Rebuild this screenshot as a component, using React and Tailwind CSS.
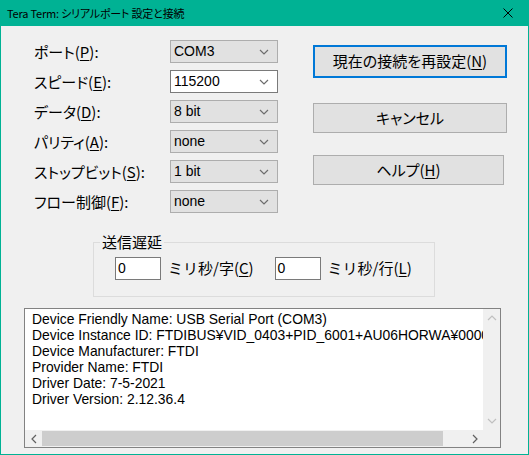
import React from 'react';

const jp = "font-['Noto_Sans_CJK_JP','Noto_Sans',sans-serif] [font-feature-settings:'palt']";
const latin = "font-['Liberation_Sans','Noto_Sans_CJK_JP',sans-serif]";

const Chevron = ({ dir = 'down', color = '#6d6d6d' }) => {
  const pts = {
    down: '1,1 5,5 9,1',
    up: '1,5 5,1 9,5',
    left: '5,1 1,5 5,9',
    right: '1,1 5,5 1,9',
  }[dir];
  const horiz = dir === 'left' || dir === 'right';
  return (
    <svg width={horiz ? 6 : 10} height={horiz ? 10 : 6} viewBox={horiz ? '0 0 6 10' : '0 0 10 6'} fill="none">
      <polyline points={pts} stroke={color} strokeWidth="1.2" />
    </svg>
  );
};

const Mn = ({ children }) => <span className="underline underline-offset-2">{children}</span>;

const Combo = ({ value, white }) => (
  <div
    className={`h-[23px] w-[108px] flex items-center justify-between pl-[3px] pr-[8px] border text-[14px] text-black ${latin} ${
      white ? 'bg-white border-[#7a7a7a]' : 'bg-[#e1e1e1] border-[#adadad]'
    }`}
  >
    <span>{value}</span>
    <Chevron />
  </div>
);

const rows = [
  { label: <>ポート(<Mn>P</Mn>):</>, value: 'COM3' },
  { label: <>スピード(<Mn>E</Mn>):</>, value: '115200', white: true },
  { label: <>データ(<Mn>D</Mn>):</>, value: '8 bit' },
  { label: <>パリティ(<Mn>A</Mn>):</>, value: 'none' },
  { label: <>ストップビット(<Mn>S</Mn>):</>, value: '1 bit' },
  { label: <>フロー制御(<Mn>F</Mn>):</>, value: 'none' },
];

const info = [
  'Device Friendly Name: USB Serial Port (COM3)',
  'Device Instance ID: FTDIBUS¥VID_0403+PID_6001+AU06HORWA¥0000',
  'Device Manufacturer: FTDI',
  'Provider Name: FTDI',
  'Driver Date: 7-5-2021',
  'Driver Version: 2.12.36.4',
];

const App = () => {
  return (
    <div className={`w-[529px] h-[455px] bg-[#00b294] px-[1px] pb-[1px] flex flex-col ${jp}`}>
      <div className="h-[26px] flex items-center justify-between pl-[6px] pr-[15px] text-[11px] tracking-[-0.2px] text-black">
        <span>Tera Term: シリアルポート 設定と接続</span>
        <svg width="10" height="10" viewBox="0 0 10 10">
          <path d="M0.5 0.5 L9.5 9.5 M9.5 0.5 L0.5 9.5" stroke="#000" strokeWidth="1" />
        </svg>
      </div>

      <div className="flex-1 bg-[#f0f0f0] flex flex-col">
        <div className="flex mt-[14px] ml-[33px]">
          <div className="flex flex-col gap-[7px]">
            {rows.map((r, i) => (
              <div key={i} className="flex items-center h-[23px]">
                <div className="w-[136px] text-[15px] text-black leading-[23px]">{r.label}</div>
                <Combo value={r.value} white={r.white} />
              </div>
            ))}
          </div>

          <div className="flex flex-col ml-[35px] mt-[5px] text-[15px] text-black">
            <button className="w-[194px] h-[33px] bg-[#e1e1e1] border-2 border-[#0078d7] flex items-center justify-center">
              現在の接続を再設定(<Mn>N</Mn>)
            </button>
            <button className="w-[194px] h-[30px] mt-[25px] bg-[#e1e1e1] border border-[#adadad] flex items-center justify-center">
              キャンセル
            </button>
            <button className="w-[191px] h-[30px] mt-[22px] bg-[#e1e1e1] border border-[#adadad] flex items-center justify-center">
              ヘルプ(<Mn>H</Mn>)
            </button>
          </div>
        </div>

        <fieldset className="mt-[19px] ml-[92px] w-[342px] h-[65px] border border-[#dcdcdc]">
          <legend className="ml-[6px] px-[2px] text-[15px] leading-[20px] text-black">送信遅延</legend>
          <div className="flex items-center mt-[5px] ml-[21px] text-[15px] text-black [font-feature-settings:normal]">
            <div className={`w-[46px] h-[23px] bg-white border border-[#7a7a7a] pl-[2px] text-[14px] leading-[21px] ${latin}`}>0</div>
            <span className="ml-[7px]">ミリ秒/字(<Mn>C</Mn>)</span>
            <div className={`ml-[21px] w-[46px] h-[23px] bg-white border border-[#7a7a7a] pl-[2px] text-[14px] leading-[21px] ${latin}`}>0</div>
            <span className="ml-[7px]">ミリ秒/行(<Mn>L</Mn>)</span>
          </div>
        </fieldset>

        <div className="mt-[11px] ml-[23px] w-[477px] h-[140px] border border-[#828282] flex flex-col">
          <div className="flex flex-1 min-h-0">
            <div className={`flex-1 bg-white overflow-hidden pl-[7px] pt-[2px] text-[13.9px] leading-[16px] text-black whitespace-nowrap ${latin}`}>
              {info.map((l, i) => (
                <div key={i}>{l}</div>
              ))}
            </div>
            <div className="w-[17px] bg-[#f0f0f0] flex flex-col items-center justify-between py-[6px]">
              <Chevron dir="up" color="#c0c0c0" />
              <Chevron dir="down" color="#c0c0c0" />
            </div>
          </div>
          <div className="h-[17px] flex">
            <div className="flex-1 bg-[#f0f0f0] flex items-center">
              <div className="w-[17px] flex items-center justify-center">
                <Chevron dir="left" color="#606060" />
              </div>
              <div className="flex-1 h-full py-[1px]">
                <div className="w-[401px] h-full bg-[#cdcdcd]" />
              </div>
              <div className="w-[17px] flex items-center justify-center">
                <Chevron dir="right" color="#606060" />
              </div>
            </div>
            <div className="w-[17px] bg-[#f0f0f0]" />
          </div>
        </div>
      </div>
    </div>
  );
};

export default App;
